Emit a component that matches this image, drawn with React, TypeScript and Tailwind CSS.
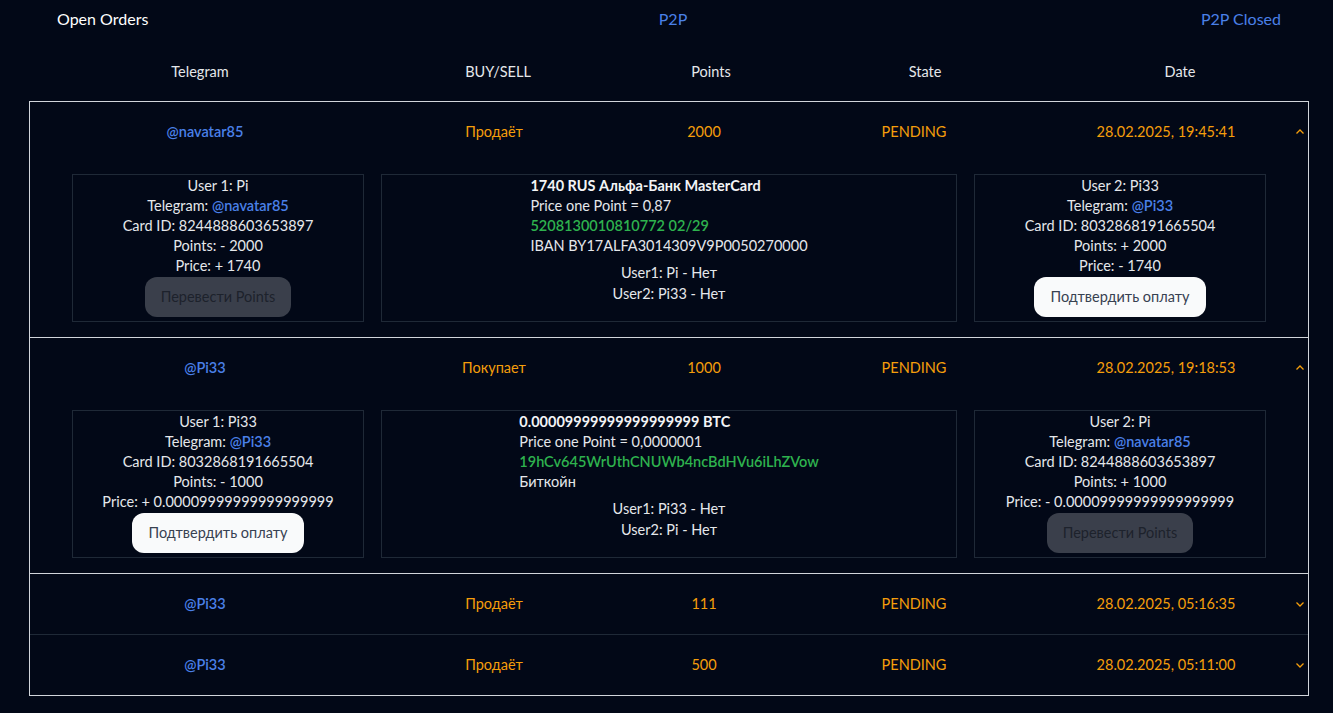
import React from "react";

const FONT = { fontFamily: "Lato, 'Noto Sans', sans-serif" };

function Chevron({ up }: { up: boolean }) {
  return (
    <svg width="10" height="10" viewBox="0 0 10 10" className="text-[#f59e0b]">
      {up ? (
        <path d="M1.5 6.5 L5 3 L8.5 6.5" fill="none" stroke="currentColor" strokeWidth="1.3" />
      ) : (
        <path d="M1.5 3.5 L5 7 L8.5 3.5" fill="none" stroke="currentColor" strokeWidth="1.3" />
      )}
    </svg>
  );
}

const ROW_COLS = "grid grid-cols-[350px_228px_192px_228px_262px_18px] items-center";

function SummaryRow({
  tg,
  side,
  points,
  date,
  open,
}: {
  tg: string;
  side: string;
  points: string;
  date: string;
  open: boolean;
}) {
  return (
    <div className={`${ROW_COLS} h-[60px] text-[14.5px]`}>
      <div className="text-center font-semibold text-[#4a80e8]">{tg}</div>
      <div className="text-center text-[#f59e0b]">{side}</div>
      <div className="text-center text-[#f59e0b]">{points}</div>
      <div className="text-center text-[#f59e0b]">PENDING</div>
      <div className="pl-[14px] text-center text-[#f59e0b]">{date}</div>
      <div className="flex justify-start pl-[5px]">
        <Chevron up={open} />
      </div>
    </div>
  );
}

function UserBox({
  title,
  tg,
  card,
  points,
  price,
  confirm,
}: {
  title: string;
  tg: string;
  card: string;
  points: string;
  price: string;
  confirm: boolean;
}) {
  return (
    <div className="flex flex-col items-center border border-[#1f2937] pt-[1px] text-[14.5px] leading-5 text-[#e5e7eb]">
      <div>{title}</div>
      <div>
        Telegram: <span className="font-semibold text-[#4a80e8]">{tg}</span>
      </div>
      <div>Card ID: {card}</div>
      <div>Points: {points}</div>
      <div>Price: {price}</div>
      {confirm ? (
        <button className="mt-[1px] h-10 rounded-xl bg-[#f9fafb] px-4 text-[14.5px] text-[#374151]">
          Подтвердить оплату
        </button>
      ) : (
        <button className="mt-[1px] h-10 rounded-xl bg-[#3a3f4b] px-4 text-[14.5px] text-[#1d222c]">
          Перевести Points
        </button>
      )}
    </div>
  );
}

function MidBox({
  title,
  price,
  addr,
  extra,
  u1,
  u2,
}: {
  title: string;
  price: string;
  addr: string;
  extra: string;
  u1: string;
  u2: string;
}) {
  return (
    <div className="flex flex-col items-center border border-[#1f2937] pt-[1px] text-[14.5px] leading-5 text-[#e5e7eb]">
      <div className="text-left">
        <div className="font-bold text-[#f3f4f6]">{title}</div>
        <div>{price}</div>
        <div className="font-semibold text-[#2eb24e]">{addr}</div>
        <div>{extra}</div>
      </div>
      <div className="mt-[7px] text-center">
        <div>{u1}</div>
        <div className="mt-[1px]">{u2}</div>
      </div>
    </div>
  );
}

export default function App() {
  return (
    <div className="min-h-[713px] w-full bg-[#020817] text-white" style={FONT}>
      <div className="flex items-center justify-between pl-[57px] pr-[52px] pt-[7px] pb-[11px] text-base">
        <div className="w-[200px] text-white">Open Orders</div>
        <div className="ml-[8px] text-[#4a80e8]">P2P</div>
        <div className="w-[200px] text-right text-[#4a80e8]">P2P Closed</div>
      </div>
      <div className="ml-[29px] w-[1280px]">
        <div className="grid h-[59px] grid-cols-[342px_254px_172px_256px_254px] items-center text-[14.5px] text-[#e5e7eb]">
          <div className="text-center">Telegram</div>
          <div className="text-center">BUY/SELL</div>
          <div className="text-center">Points</div>
          <div className="text-center">State</div>
          <div className="text-center">Date</div>
        </div>
        <div className="border border-[#d1d5db]">
          <div className="border-b border-[#d1d5db]">
            <SummaryRow tg="@navatar85" side="Продаёт" points="2000" date="28.02.2025, 19:45:41" open />
            <div className="grid grid-cols-[292px_576px_292px] gap-[17px] px-[42px] pt-[12px] pb-[15px]">
              <div className="h-[148px] grid">
                <UserBox
                  title="User 1: Pi"
                  tg="@navatar85"
                  card="8244888603653897"
                  points="- 2000"
                  price="+ 1740"
                  confirm={false}
                />
              </div>
              <div className="h-[148px] grid">
                <MidBox
                  title="1740 RUS Альфа-Банк MasterCard"
                  price="Price one Point = 0,87"
                  addr="5208130010810772 02/29"
                  extra="IBAN BY17ALFA3014309V9P0050270000"
                  u1="User1: Pi - Нет"
                  u2="User2: Pi33 - Нет"
                />
              </div>
              <div className="h-[148px] grid">
                <UserBox
                  title="User 2: Pi33"
                  tg="@Pi33"
                  card="8032868191665504"
                  points="+ 2000"
                  price="- 1740"
                  confirm
                />
              </div>
            </div>
          </div>
          <div className="border-b border-[#d1d5db]">
            <SummaryRow tg="@Pi33" side="Покупает" points="1000" date="28.02.2025, 19:18:53" open />
            <div className="grid grid-cols-[292px_576px_292px] gap-[17px] px-[42px] pt-[12px] pb-[15px]">
              <div className="h-[148px] grid">
                <UserBox
                  title="User 1: Pi33"
                  tg="@Pi33"
                  card="8032868191665504"
                  points="- 1000"
                  price="+ 0.00009999999999999999"
                  confirm
                />
              </div>
              <div className="h-[148px] grid">
                <MidBox
                  title="0.00009999999999999999 BTC"
                  price="Price one Point = 0,0000001"
                  addr="19hCv645WrUthCNUWb4ncBdHVu6iLhZVow"
                  extra="Биткойн"
                  u1="User1: Pi33 - Нет"
                  u2="User2: Pi - Нет"
                />
              </div>
              <div className="h-[148px] grid">
                <UserBox
                  title="User 2: Pi"
                  tg="@navatar85"
                  card="8244888603653897"
                  points="+ 1000"
                  price="- 0.00009999999999999999"
                  confirm={false}
                />
              </div>
            </div>
          </div>
          <div className="border-b border-[#1f2937]">
            <SummaryRow tg="@Pi33" side="Продаёт" points="111" date="28.02.2025, 05:16:35" open={false} />
          </div>
          <div>
            <SummaryRow tg="@Pi33" side="Продаёт" points="500" date="28.02.2025, 05:11:00" open={false} />
          </div>
        </div>
      </div>
    </div>
  );
}
